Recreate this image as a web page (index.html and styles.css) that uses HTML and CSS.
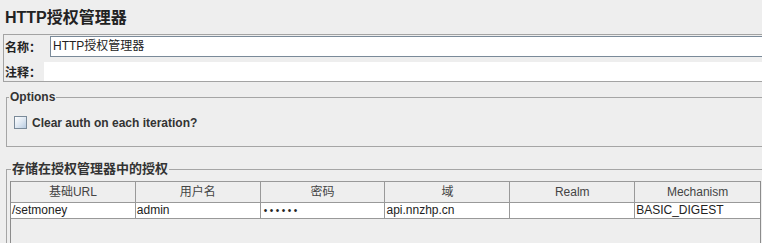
FILE: index.html
```html
<!DOCTYPE html>
<html lang="zh-CN">

<head>
    <meta charset="UTF-8">
    <title>HTTP授权管理器</title>
    <link rel="stylesheet" href="styles.css">
</head>

<body>
    <h1 class="title">HTTP授权管理器</h1>

    <!-- 名称 / 注释 -->
    <div class="name-panel">
        <div class="field-row">
            <label class="field-label name-label">名称：</label>
            <div class="text-field name-field">HTTP授权管理器</div>
        </div>
        <div class="field-row comment-row">
            <label class="field-label comment-label">注释：</label>
            <div class="text-field comment-field"></div>
        </div>
    </div>

    <fieldset class="group options-group">
        <legend>Options</legend>
        <label class="check-row">
            <span class="checkbox"></span>
            <span>Clear auth on each iteration?</span>
        </label>
    </fieldset>

    <fieldset class="group auth-group">
        <legend>存储在授权管理器中的授权</legend>
        <div class="table-pane">
            <table class="auth-table">
                <thead>
                    <tr>
                        <th>基础URL</th>
                        <th>用户名</th>
                        <th>密码</th>
                        <th>域</th>
                        <th>Realm</th>
                        <th>Mechanism</th>
                    </tr>
                </thead>
                <tbody>
                    <tr>
                        <td>/setmoney</td>
                        <td>admin</td>
                        <td class="password">••••••</td>
                        <td>api.nnzhp.cn</td>
                        <td></td>
                        <td>BASIC_DIGEST</td>
                    </tr>
                </tbody>
            </table>
        </div>
    </fieldset>
</body>

</html>
```

FILE: styles.css
```css
/* Reset */
* {
    margin: 0;
    padding: 0;
    box-sizing: border-box;
}

html {
    overflow: hidden;
}

body {
    background-color: #eeeeee;
    font-family: "Liberation Sans", "Noto Sans CJK SC", sans-serif;
    font-size: 12px;
    color: #222;
    width: 762px;
    height: 243px;
    overflow: hidden;
}

.title {
    height: 34px;
    padding: 8px 0 0 5px;
    font-size: 16px;
    line-height: 20px;
    font-weight: bold;
    color: #222;
}

/* Name / comment panel */
.name-panel {
    margin-left: 3px;
    height: 48px;
    padding: 1px 0 0 1px;
    border: 1px solid #a3a3a3;
    border-right: none;
}

.field-row {
    display: flex;
    align-items: center;
}

.field-label {
    font-weight: bold;
    font-size: 12px;
    color: #222;
}

.name-label {
    width: 45px;
}

.comment-label {
    width: 39px;
}

.text-field {
    flex: 1;
    background-color: #fff;
}

.name-field {
    height: 21px;
    border: 1px solid #7a8a99;
    border-right: none;
    padding-left: 2px;
    line-height: 19px;
}

.comment-row {
    margin-top: 5px;
}

.comment-field {
    height: 19px;
}

.group {
    border: 1px solid #a5a5a5;
    border-right: none;
    margin: 8px 0 0 6px;
    padding: 0 0 0 2px;
}

.group legend {
    padding: 0 1px;
    font-weight: bold;
    color: #333;
}

.options-group {
    padding-bottom: 17px;
}

.options-group legend {
    font-size: 12px;
    line-height: 14px;
}

.check-row {
    display: flex;
    align-items: center;
    gap: 5px;
    margin: 12px 0 0 5px;
    height: 13px;
    font-weight: bold;
    color: #333;
}

.checkbox {
    width: 13px;
    height: 13px;
    border: 1px solid #7a8a99;
    background: linear-gradient(135deg, #ffffff 0%, #dce6f1 55%, #b8cbe0 100%);
}

.auth-group {
    margin-top: 14px;
    height: 82px;
    border-bottom: none;
}

.auth-group legend {
    margin-left: 2px;
    font-size: 13px;
    line-height: 16px;
}

/* Table */
.table-pane {
    margin: 4px 0 0 1px;
    width: 751px;
    height: 62px;
    border-left: 1px solid #8c8c8c;
    border-right: 1px solid #8c8c8c;
}

.auth-table {
    width: 100%;
    table-layout: fixed;
    border-collapse: separate;
    border-spacing: 0;
    border-top: 1px solid #999;
}

.auth-table th,
.auth-table td {
    border-right: 1px solid #999;
    border-bottom: 1px solid #999;
    padding: 0 1px;
    white-space: nowrap;
    overflow: hidden;
}

.auth-table th:last-child,
.auth-table td:last-child {
    border-right: none;
}

.auth-table th {
    font-weight: normal;
    line-height: 20px;
    color: #444;
    background-color: #eeeeee;
    text-align: center;
}

.auth-table td {
    line-height: 15px;
    background-color: #fff;
    text-align: left;
}

.auth-table td.password {
    font-size: 10px;
    letter-spacing: 2.5px;
    padding-left: 3px;
}
```
